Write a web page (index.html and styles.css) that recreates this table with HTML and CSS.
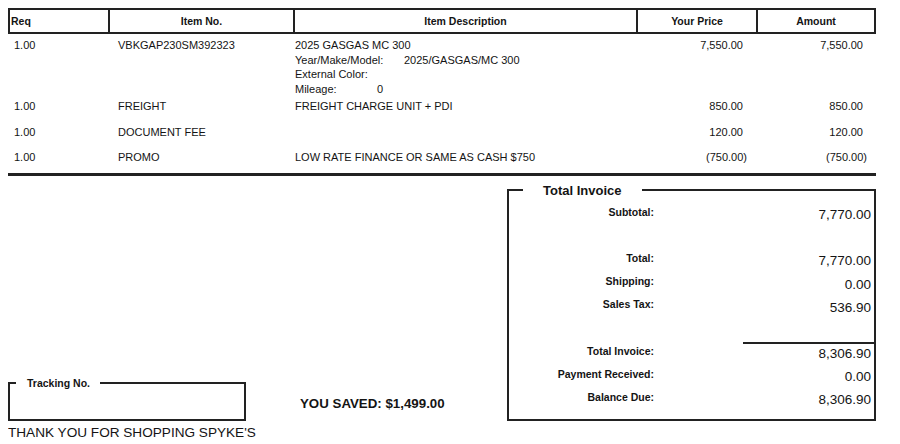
FILE: index.html
```html
<!DOCTYPE html>
<html lang="en">
<head>
<meta charset="utf-8">
<title>Invoice</title>
<link rel="stylesheet" href="styles.css">
</head>
<body>
<table class="items">
  <colgroup>
    <col class="c-req"><col class="c-item"><col class="c-desc"><col class="c-price"><col class="c-amt">
  </colgroup>
  <thead>
    <tr>
      <th class="h-left">Req</th>
      <th>Item No.</th>
      <th>Item Description</th>
      <th>Your Price</th>
      <th class="h-last">Amount</th>
    </tr>
  </thead>
  <tbody>
    <tr class="first">
      <td class="req">1.00</td>
      <td class="item">VBKGAP230SM392323</td>
      <td class="desc">2025 GASGAS MC 300<br><span class="k k-ymm">Year/Make/Model:</span>2025/GASGAS/MC 300<br>External Color:<br><span class="k k-mil">Mileage:</span>0</td>
      <td class="num">7,550.00</td>
      <td class="num">7,550.00</td>
    </tr>
    <tr>
      <td class="req">1.00</td>
      <td class="item">FREIGHT</td>
      <td class="desc">FREIGHT CHARGE UNIT + PDI</td>
      <td class="num">850.00</td>
      <td class="num">850.00</td>
    </tr>
    <tr>
      <td class="req">1.00</td>
      <td class="item">DOCUMENT FEE</td>
      <td class="desc"></td>
      <td class="num">120.00</td>
      <td class="num">120.00</td>
    </tr>
    <tr>
      <td class="req">1.00</td>
      <td class="item">PROMO</td>
      <td class="desc">LOW RATE FINANCE OR SAME AS CASH $750</td>
      <td class="num neg">(750.00)</td>
      <td class="num neg">(750.00)</td>
    </tr>
  </tbody>
</table>

<div class="lower">
  <div class="left">
    <fieldset class="tracking">
      <legend>Tracking No.</legend>
      <div class="track-body"></div>
    </fieldset>
    <div class="saved">YOU SAVED: $1,499.00</div>
  </div>
  <fieldset class="totals">
    <legend>Total Invoice</legend>
    <div class="trow"><span class="lbl">Subtotal:</span><span class="val">7,770.00</span></div>
    <div class="trow"></div>
    <div class="trow"><span class="lbl">Total:</span><span class="val">7,770.00</span></div>
    <div class="trow"><span class="lbl">Shipping:</span><span class="val val-low">0.00</span></div>
    <div class="trow"><span class="lbl">Sales Tax:</span><span class="val val-low">536.90</span></div>
    <div class="rule"></div>
    <div class="trow"><span class="lbl">Total Invoice:</span><span class="val">8,306.90</span></div>
    <div class="trow"><span class="lbl">Payment Received:</span><span class="val">0.00</span></div>
    <div class="trow"><span class="lbl">Balance Due:</span><span class="val">8,306.90</span></div>
  </fieldset>
</div>
<p class="thanks">THANK YOU FOR SHOPPING SPYKE'S</p>
</body>
</html>
```
FILE: styles.css
```css
html, body {
  background: #ffffff;
}
body {
  margin: 8px;
  color: #141414;
  font-family: "Liberation Sans", Arial, sans-serif;
}

/* ---------- items table ---------- */
.items {
  width: 868px;
  table-layout: fixed;
  border-collapse: separate;
  border-spacing: 0;
  border-bottom: 3px solid #222;
  font-size: 11px;
}
.c-req { width: 100px; }
.c-item { width: 185px; }
.c-desc { width: 343px; }
.c-price { width: 120px; }
.c-amt { width: 120px; }

.items th {
  height: 22px;
  padding: 0;
  font-size: 10.5px;
  font-weight: bold;
  text-align: center;
  border-top: 2px solid #222;
  border-bottom: 2px solid #222;
  border-left: 2px solid #222;
}
.items th.h-left {
  text-align: left;
  padding-left: 1px;
}
.items th.h-last {
  border-right: 2px solid #222;
}

.items td {
  vertical-align: top;
  line-height: 14.5px;
  padding: 3px 0 8px 0;
  white-space: nowrap;
}
.items tr.first td {
  padding-top: 4px;
  padding-bottom: 0;
}
.items td.req { padding-left: 6px; }
.items td.item { padding-left: 10px; }
.items td.desc { padding-left: 2px; }
.items td.num {
  text-align: right;
  padding-right: 13px;
}
.items td.num.neg {
  padding-right: 9px;
}
.k {
  display: inline-block;
}
.k-ymm { width: 109px; }
.k-mil { width: 82px; }

/* ---------- lower section ---------- */
.lower {
  display: flex;
  width: 868px;
  margin-top: 7px;
}
.left {
  flex: 1;
  display: flex;
  align-items: flex-end;
}
.tracking {
  width: 238px;
  box-sizing: border-box;
  margin: 0;
  padding: 0;
  min-width: 0;
  border: 2px solid #222;
}
.tracking legend {
  margin-left: 6px;
  padding: 0 10px 0 11px;
  font-size: 10.5px;
  font-weight: bold;
  line-height: 12px;
}
.track-body {
  height: 30px;
}
.saved {
  margin: 0 0 8.5px 54px;
  font-size: 13.3px;
  font-weight: bold;
  line-height: 16px;
}

.totals {
  width: 369px;
  box-sizing: border-box;
  margin: 0;
  min-width: 0;
  padding: 8px 3px 5px 0;
  border: 2px solid #222;
}
.totals legend {
  margin-left: 14px;
  padding: 0 20px;
  font-size: 13px;
  font-weight: bold;
  line-height: 15px;
}
.trow {
  display: grid;
  grid-template-columns: 145px 1fr;
  height: 23px;
  align-items: start;
}
.lbl {
  font-size: 10.5px;
  font-weight: bold;
  line-height: 13px;
  text-align: right;
}
.val {
  font-size: 13.5px;
  line-height: 16px;
  text-align: right;
  padding-top: 1px;
}
.val-low {
  padding-top: 2.5px;
}
.rule {
  height: 2px;
  width: 131px;
  background: #222;
  margin: 21px -3px 1px auto;
}

.thanks {
  margin: 4px 0 0 0;
  font-size: 13.6px;
  line-height: 16px;
}
```
